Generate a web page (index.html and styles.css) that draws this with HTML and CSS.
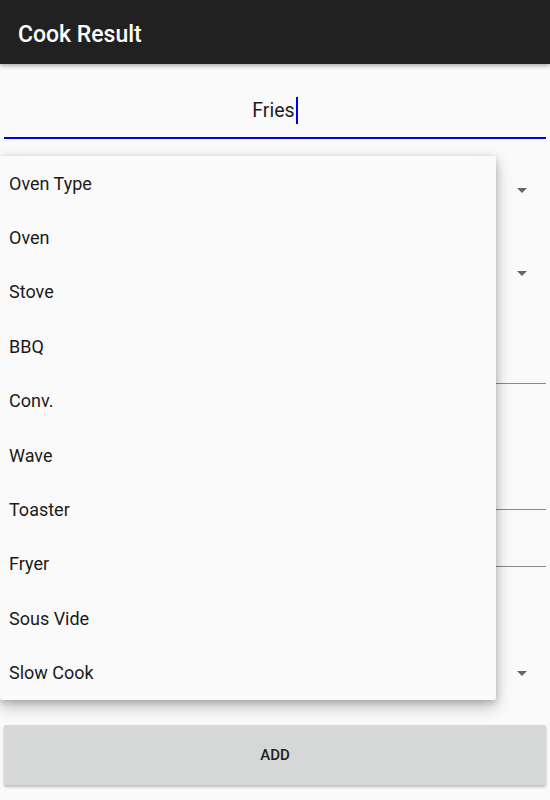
FILE: index.html
```html
<!DOCTYPE html>
<html>
<head>
<meta charset="utf-8">
<link rel="stylesheet" href="styles.css">
</head>
<body>
<header class="appbar"><h1 class="title">Cook Result</h1></header>
<main class="form">
  <div class="edit focused"><span class="edit-text">Fries</span><span class="cursor"></span></div>
  <div class="spinner s1"><span class="arrow"></span></div>
  <div class="spinner s2"><span class="arrow"></span></div>
  <div class="field f1"></div>
  <div class="field f2"></div>
  <div class="field f3"></div>
  <div class="spinner s3"><span class="arrow"></span></div>
  <button class="btn">ADD</button>
</main>
<ul class="popup">
  <li>Oven Type</li>
  <li>Oven</li>
  <li>Stove</li>
  <li>BBQ</li>
  <li>Conv.</li>
  <li>Wave</li>
  <li>Toaster</li>
  <li>Fryer</li>
  <li>Sous Vide</li>
  <li>Slow Cook</li>
</ul>
</body>
</html>
```
FILE: styles.css
```css
html, body { margin: 0; padding: 0; }
body {
  background: #fafafa;
  font-family: Roboto, "Liberation Sans", sans-serif;
  width: 550px;
  height: 800px;
  overflow: hidden;
  position: relative;
}
.appbar {
  height: 64px;
  box-sizing: border-box;
  background: #212121;
  display: flex;
  align-items: center;
  padding-left: 18px;
  padding-top: 5px;
  box-shadow: 0 2px 4px rgba(0,0,0,0.3);
  position: relative;
  z-index: 1;
}
.title {
  margin: 0;
  color: #fff;
  font-size: 23px;
  font-weight: 500;
  line-height: 1;
}
.form {
  display: flex;
  flex-direction: column;
  padding: 0 4px;
}
.edit {
  display: flex;
  justify-content: center;
  align-items: center;
  border-bottom: 2px solid #0000f0;
  padding-top: 20px;
  box-sizing: border-box;
  height: 75px;
}
.edit-text { font-size: 19.5px; color: #1e1e1e; }
.cursor { width: 2px; height: 27px; background: #0000f0; margin-left: 1px; }
.spinner {
  display: flex;
  justify-content: flex-end;
  align-items: center;
  padding-right: 19px;
}
.s1 { height: 83px; margin-top: 10px; }
.s2 { height: 83px; }
.arrow {
  width: 0; height: 0;
  border-left: 5px solid transparent;
  border-right: 5px solid transparent;
  border-top: 5px solid #666;
}
.field { border-bottom: 1px solid #8a8a8a; }
.f1 { height: 68px; }
.f2 { height: 125px; }
.f3 { height: 56px; }
.s3 { height: 143px; align-items: flex-end; padding-bottom: 34px; box-sizing: border-box; }
.btn {
  margin-top: 15px;
  height: 60px;
  border: none;
  border-radius: 2px;
  background: #d6d7d7;
  color: #1e1e1e;
  font-family: Roboto, "Liberation Sans", sans-serif;
  font-size: 15px;
  font-weight: 500;
  box-shadow: 0 2px 3px rgba(0,0,0,0.25);
}
.popup {
  position: absolute;
  left: 0;
  top: 156px;
  width: 496px;
  margin: 0;
  padding: 0;
  list-style: none;
  background: #fafafa;
  border-radius: 2px;
  box-shadow: 0 6px 16px rgba(0,0,0,0.28), 0 2px 6px rgba(0,0,0,0.15);
  z-index: 2;
}
.popup li {
  height: 54.4px;
  display: flex;
  align-items: center;
  padding-left: 9px;
  font-size: 18px;
  color: #1a1a1a;
}
```
